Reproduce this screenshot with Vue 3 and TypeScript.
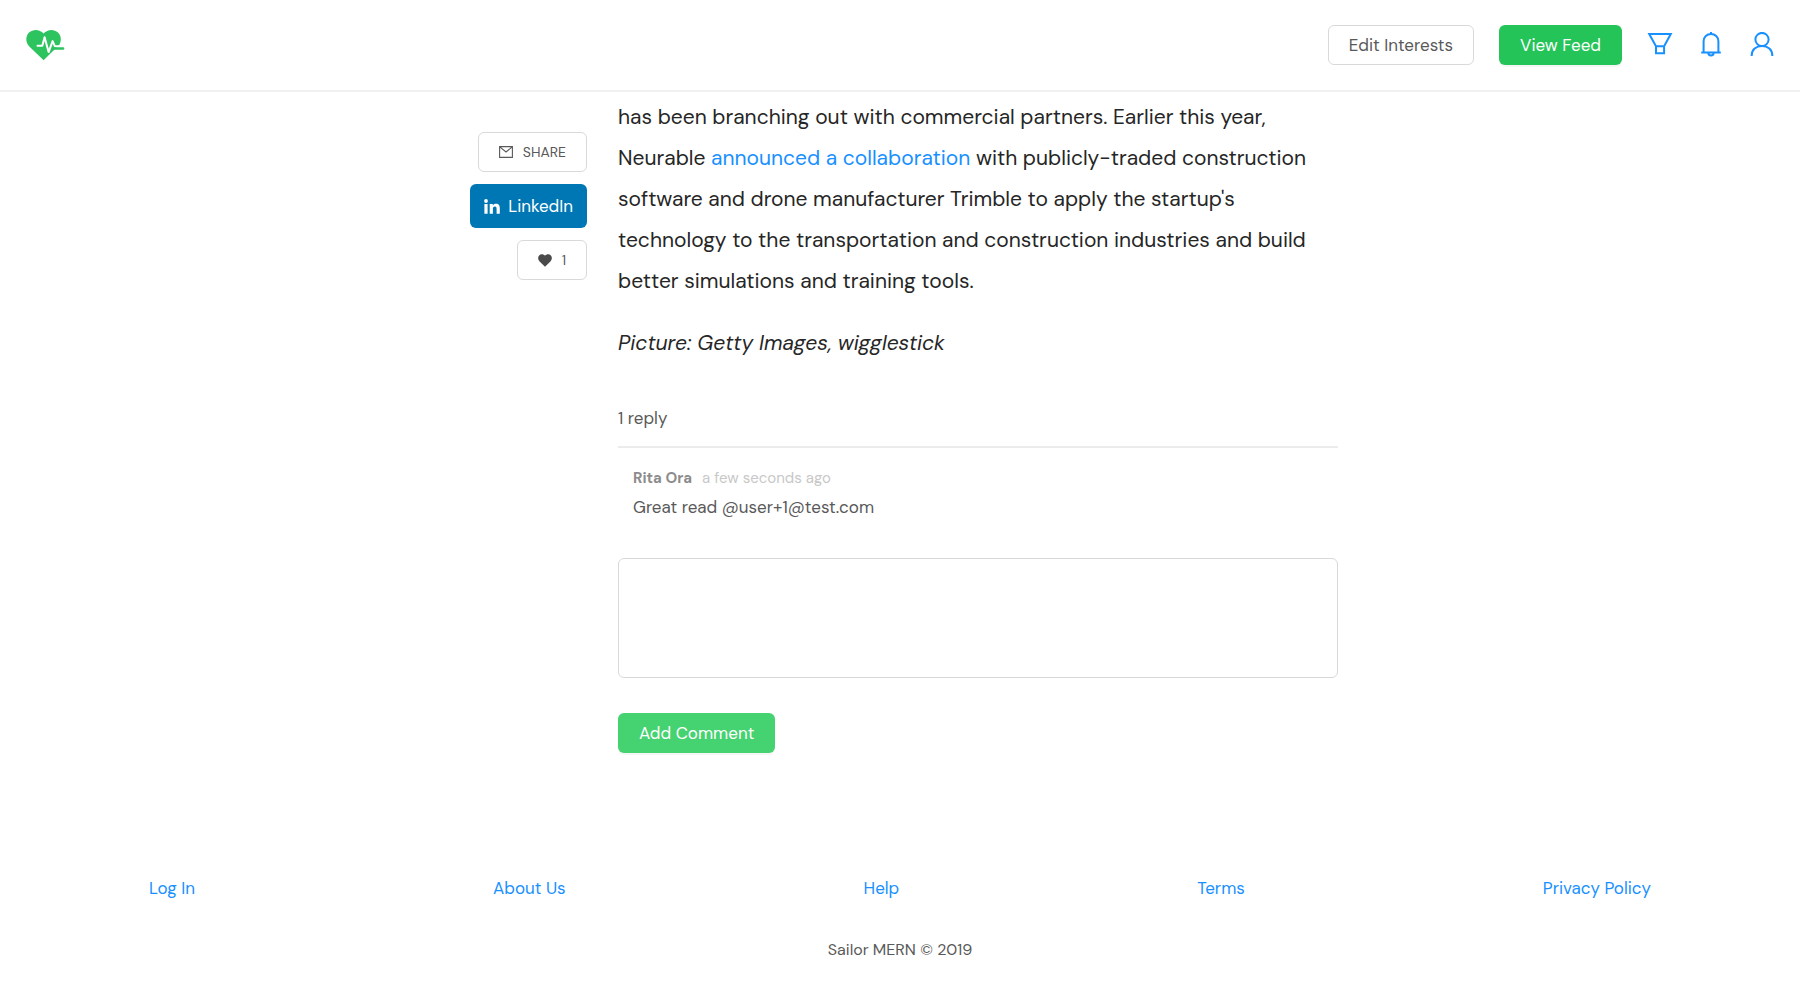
<script setup lang="ts">
import { ref } from 'vue'

interface FooterLink {
  label: string
  href: string
}

const links: FooterLink[] = [
  { label: 'Log In', href: '#login' },
  { label: 'About Us', href: '#about' },
  { label: 'Help', href: '#help' },
  { label: 'Terms', href: '#terms' },
  { label: 'Privacy Policy', href: '#privacy' },
]

const comment = ref('')
</script>

<template>
  <div class="page">
    <header class="topbar">
      <a class="icon-link" href="#home" aria-label="Home">
        <svg width="40" height="34" viewBox="0 0 40 34">
          <path d="M18.6 32.3 4.3 18.4C.1 14 .6 7.7 4.1 4.5 8.2.9 14.7 1 18.6 5.6 22.5 1 29 .9 33 4.5c3 2.9 3.7 7.5 1.7 11.7L28.5 22.5z" fill="#2dc45f" />
          <path d="M12.5 17.8h4.8l2.3-8.5 4 14.8 4-11 2.2 5.1h8.5" fill="none" stroke="#fff" stroke-width="2" stroke-linecap="round" stroke-linejoin="round" />
          <path d="M29 20.5h9" stroke="#2dc45f" stroke-width="2.6" stroke-linecap="round" />
        </svg>
      </a>
      <nav class="actions">
        <button type="button" class="btn btn-outline">Edit Interests</button>
        <button type="button" class="btn btn-green">View Feed</button>
        <a class="icon-link" href="#filter" aria-label="Filter">
          <svg class="line-icon" width="26" height="26" viewBox="0 0 26 26">
            <path d="M2.2 2h21.6l-6.7 12.2v7H9v-7zM9 14.2h8.1" />
          </svg>
        </a>
        <a class="icon-link" href="#notifications" aria-label="Notifications">
          <svg class="line-icon" width="26" height="26" viewBox="0 0 26 26">
            <path d="M3.2 20.5h19.6M5.6 20.5V9.3a7.4 7.4 0 0 1 14.8 0v11.2M13 2V0M10.3 20.7a2.7 2.7 0 0 0 5.4 0" />
          </svg>
        </a>
        <a class="icon-link" href="#account" aria-label="Account">
          <svg class="line-icon" width="26" height="26" viewBox="0 0 26 26">
            <circle cx="13" cy="7.5" r="6.6" />
            <path d="M2.6 23.9C2.6 17.5 7.2 14.1 13 14.1s10.4 3.4 10.4 9.8" />
          </svg>
        </a>
      </nav>
    </header>

    <main class="content">
      <aside class="share">
        <button type="button" class="btn btn-outline btn-small">
          <svg width="14" height="12" viewBox="0 0 14 12" fill="none" stroke="#595959" stroke-width="1.1">
            <path d="M.6.6h12.8v10.8H.6zM.8.9 7 6l6.2-5.1" />
          </svg>
          SHARE
        </button>
        <button type="button" class="btn btn-linkedin">
          <svg width="16" height="15" viewBox="0 0 16 15" fill="#fff">
            <circle cx="2" cy="2" r="1.9" />
            <path d="M.4 5h3.2v9.8H.4zM5.7 5h3.1v1.4c.6-1 1.7-1.7 3.2-1.7 3 0 3.8 1.9 3.8 4.7v5.4h-3.2V10c0-1.3-.1-2.6-1.7-2.6S8.9 8.6 8.9 10v4.8H5.7z" />
          </svg>
          LinkedIn
        </button>
        <button type="button" class="btn btn-outline btn-small">
          <svg width="14" height="13" viewBox="0 0 14 13" fill="#4a4a4a">
            <path d="M7 12.7 1.6 7.4C-.3 5.5-.2 2.9 1.1 1.4 2.7-.3 5.5-.2 7 1.7 8.5-.2 11.3-.3 12.9 1.4c1.3 1.5 1.4 4.1-.5 6z" />
          </svg>
          1
        </button>
      </aside>

      <div class="story">
        <article class="body">
          <p>
            has been branching out with commercial partners. Earlier this year,
            Neurable <a href="#collaboration">announced a collaboration</a> with publicly-traded construction
            software and drone manufacturer Trimble to apply the startup's
            technology to the transportation and construction industries and build
            better simulations and training tools.
          </p>
          <p><em>Picture: Getty Images, wigglestick</em></p>
        </article>

        <section class="replies">
          <h2 class="count">1 reply</h2>
          <div class="reply">
            <div class="meta"><strong>Rita Ora</strong><span class="time">a few seconds ago</span></div>
            <div class="text">Great read @user+1@test.com</div>
          </div>
        </section>

        <form class="comment" @submit.prevent>
          <textarea v-model="comment" aria-label="Comment"></textarea>
          <button type="submit" class="btn btn-green btn-light">Add Comment</button>
        </form>
      </div>
    </main>

    <footer>
      <nav class="links">
        <a v-for="link in links" :key="link.label" :href="link.href">{{ link.label }}</a>
      </nav>
      <p class="copyright">Sailor MERN © 2019</p>
    </footer>
  </div>
</template>

<style>
body {
  margin: 0;
  background: #fff;
}
</style>

<style scoped>
.page {
  font-family: 'DM Sans', Inter, sans-serif;
  font-size: 17px;
  line-height: 26px;
  color: #595959;
}

.page * {
  box-sizing: border-box;
}

a {
  color: #1890ff;
  text-decoration: none;
}

.topbar {
  display: flex;
  align-items: center;
  justify-content: space-between;
  height: 92px;
  padding: 0 25px;
  border-bottom: 2px solid #f0f0f0;
}

.actions {
  display: flex;
  align-items: center;
  gap: 25px;
}

.icon-link {
  display: flex;
}

.line-icon {
  fill: none;
  stroke: #1890ff;
  stroke-width: 2;
}

.btn {
  display: inline-flex;
  align-items: center;
  justify-content: center;
  height: 40px;
  padding: 0 20px;
  border: 1px solid transparent;
  border-radius: 6px;
  font-family: inherit;
  font-size: 17px;
  white-space: nowrap;
  cursor: pointer;
}

.btn-outline {
  border-color: #d9d9d9;
  background: #fff;
  color: #595959;
}

.btn-green {
  background: #24c458;
  color: #fff;
  box-shadow: 0 2px 0 rgba(0, 0, 0, 0.04);
}

.btn-light {
  background: #45d270;
}

.btn-small {
  gap: 10px;
  font-size: 14px;
}

.btn-linkedin {
  gap: 8px;
  height: 44px;
  padding: 0 13px;
  background: #0077b5;
  color: #fff;
}

.content {
  display: flex;
  gap: 31px;
  max-width: 876px;
  margin: 0 auto;
}

.share {
  display: flex;
  flex: 1;
  flex-direction: column;
  align-items: flex-end;
  gap: 12px;
  padding-top: 40px;
}

.story {
  width: 720px;
  padding-top: 5px;
}

.body {
  font-size: 21px;
  line-height: 41px;
  color: #262626;
}

.body p {
  margin: 0 0 21px;
}

.count {
  margin: 0;
  padding: 20px 0 15px;
  border-bottom: 2px solid #ebebeb;
  font-size: 17px;
  font-weight: 400;
}

.reply {
  padding: 17px 15px 38px;
}

.meta {
  font-size: 15px;
  color: #8c8c8c;
}

.time {
  margin-left: 10px;
  color: #c8c8c8;
}

.text {
  padding-top: 3px;
}

.comment {
  display: flex;
  flex-direction: column;
  align-items: flex-start;
  gap: 35px;
}

textarea {
  display: block;
  width: 100%;
  height: 120px;
  padding: 8px 12px;
  border: 1px solid #d9d9d9;
  border-radius: 6px;
  font: inherit;
  color: inherit;
  resize: none;
}

footer {
  padding: 122px 0 22px;
}

.links {
  display: flex;
  justify-content: space-around;
}

.copyright {
  margin: 36px 0 0;
  font-size: 16px;
  text-align: center;
}
</style>
